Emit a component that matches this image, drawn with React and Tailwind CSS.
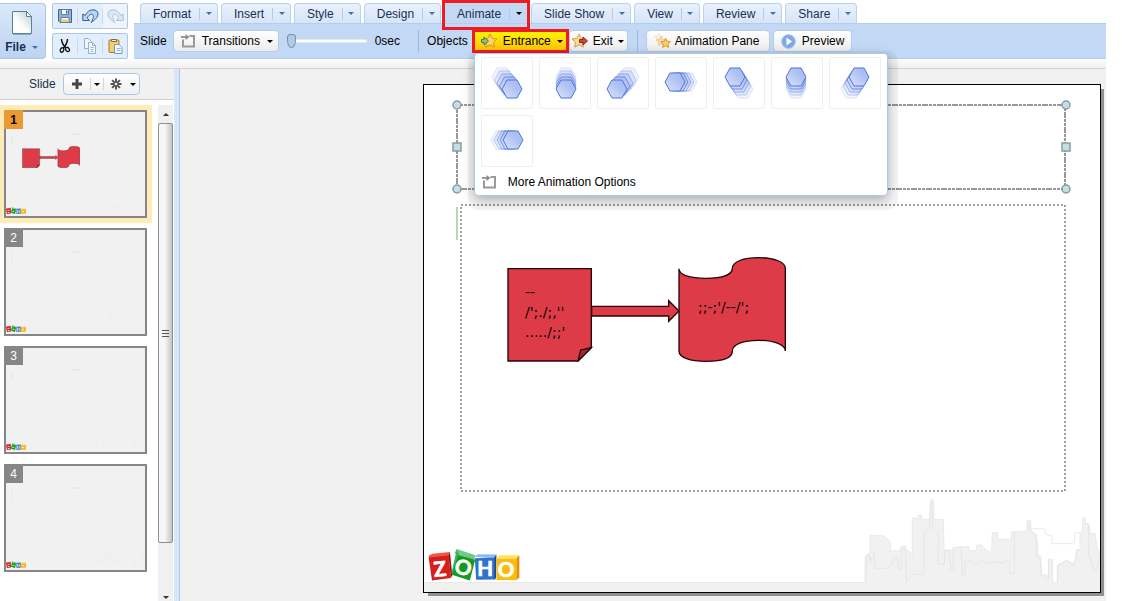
import { useState } from "react";

const TABS = ["Format", "Insert", "Style", "Design", "Animate", "Slide Show", "View", "Review", "Share"];

// cx/cy: front hexagon centre, dx/dy: how far the trail reaches behind it
const EFFECTS = [
  { name: "From top left", cx: 31, cy: 32, dx: -10, dy: -12 },
  { name: "From top", cx: 27, cy: 32, dx: 0, dy: -12 },
  { name: "From top right", cx: 20, cy: 32, dx: 12, dy: -12 },
  { name: "From right", cx: 20, cy: 25, dx: 12, dy: 0 },
  { name: "From bottom right", cx: 22, cy: 20, dx: 8, dy: 12 },
  { name: "From bottom", cx: 25, cy: 20, dx: 0, dy: 12 },
  { name: "From bottom left", cx: 30, cy: 20, dx: -8, dy: 12 },
  { name: "From left", cx: 32, cy: 25, dx: -12, dy: 0 },
];

function Caret({ className = "text-black" }) {
  return (
    <svg width="6" height="3" viewBox="0 0 6 3" fill="currentColor" className={`shrink-0 ${className}`}>
      <path d="M0 0h6L3 3z" />
    </svg>
  );
}

function FileIcon() {
  return (
    <svg width="20" height="24" viewBox="0 0 20 24">
      <defs>
        <linearGradient id="paper" x1="0" y1="1" x2="1" y2="0">
          <stop offset="0.4" stopColor="#fff" />
          <stop offset="0.8" stopColor="#d5dadd" />
        </linearGradient>
      </defs>
      <path d="M.5.5h14l5 5v17H.5z" fill="url(#paper)" stroke="#55839c" />
      <path d="M14.5.5v5h5z" fill="#fff" stroke="#55839c" />
      <path d="M1 23.5h18" stroke="#8fa9b8" />
    </svg>
  );
}

function SaveIcon() {
  return (
    <svg width="16" height="16" viewBox="0 0 16 16">
      <path d="M1.5 1.5h13v13H3l-1.500-1.500z" fill="#8fb3d9" stroke="#3f6593" />
      <path d="M4.500 1.500h7v5h-7z" fill="#fff" stroke="#5b80ab" />
      <path d="M9 2.500h1.500v3H9z" fill="#3f6593" />
      <path d="M4 9.500h8v5H4z" fill="#fff" stroke="#5b80ab" />
      <path d="M4.500 11.500h7V14h-7z" fill="#f1cf62" />
    </svg>
  );
}

function UndoIcon({ className = "" }) {
  return (
    <svg width="17" height="15" viewBox="0 0 17 15" className={className}>
      <path
        d="M.8 5v6.500h6.700L5.300 9c1.200-2.600 3.500-4.600 5.200-3.500 1.800 1.200.8 4.500-1.500 8 4-2.500 7-5.500 7-8.500 0-2.600-2-4.200-5-4.200-3.300 0-6 2-7.800 5.700z"
        fill="#b9d4f2"
        stroke="#2f6296"
        strokeLinejoin="round"
      />
    </svg>
  );
}

function CutIcon() {
  return (
    <svg width="12" height="16" viewBox="0 0 12 16" fill="none" stroke="#111">
      <path d="M2.500 1c0 3 1.500 6 4.500 9M8.500 1C8.500 4 7 7 4.500 10" strokeWidth="1.500" />
      <ellipse cx="3" cy="12" rx="1.700" ry="2.300" strokeWidth="1.300" transform="rotate(25 3 12)" />
      <ellipse cx="8.500" cy="11.500" rx="1.700" ry="2.300" strokeWidth="1.300" transform="rotate(-30 8.500 11.500)" />
    </svg>
  );
}

function CopyIcon() {
  return (
    <svg width="14" height="16" viewBox="0 0 14 16" stroke="#8fb3cd">
      <path d="M1.500.5h4l3 3v7h-7z" fill="#eef6fb" />
      <path d="M5.500 4.500h4l3 3v8h-7z" fill="#f7fbfe" />
      <path d="M9.500 4.500v3h3M7.500 9.500h3M7.500 11.500h3M7.500 13.500h3" fill="none" />
    </svg>
  );
}

function PasteIcon() {
  return (
    <svg width="15" height="16" viewBox="0 0 15 16">
      <rect x="1" y="2" width="10" height="12.500" rx="1" fill="#f5cf6b" stroke="#a57a25" />
      <path d="M3.500 3.500V1.500h5v2z" fill="#eee" stroke="#7b6a45" />
      <path d="M6.500 6.500h4.500l3 3v6H6.500z" fill="#f5fafe" stroke="#6d9dc2" />
      <path d="M8.500 10.500h4M8.500 12.500h4" stroke="#8fb6d4" />
    </svg>
  );
}

function TransitionIcon() {
  return (
    <svg width="14" height="14" viewBox="0 0 14 14" fill="none" stroke="#999">
      <path d="M8.500 2H13v10.500H2V5.500" strokeWidth="2" />
      <path d="M0 3h6" strokeWidth="2" />
      <path d="M4.500 0l4 3-4 3z" fill="#8c8c8c" stroke="none" />
    </svg>
  );
}

const STAR = "M8 1l2.100 4.400 4.900.6-3.600 3.300.9 4.800L8 11.800l-4.300 2.300.9-4.800L1 6l4.900-.6z";

function EntranceIcon() {
  return (
    <svg width="16" height="16" viewBox="0 0 16 16">
      <path d={STAR} fill="#fbd66a" stroke="#d8912a" transform="translate(1 0)" />
      <path d="M.5 6.500H3V4l4.500 4L3 12V9.500H.5z" fill="#8cc084" stroke="#3f7f49" />
    </svg>
  );
}

function ExitIcon() {
  return (
    <svg width="16" height="16" viewBox="0 0 16 16">
      <path d={STAR} fill="#fbdc93" stroke="#d99b45" transform="translate(-1 0)" />
      <path d="M7.500 6.500H11V4l4.500 4-4.500 4V9.500H7.500z" fill="#c9463d" stroke="#8d2c27" />
    </svg>
  );
}

function StarsIcon() {
  return (
    <svg width="17" height="16" viewBox="0 0 17 16">
      <g transform="scale(.6)" opacity="0.35">
        <path d={STAR} fill="#fbe0a0" stroke="#d99b45" />
      </g>
      <g transform="translate(2 3) scale(.65)" opacity="0.7">
        <path d={STAR} fill="#fbdc93" stroke="#d99b45" />
      </g>
      <g transform="translate(6 4.500) scale(.7)">
        <path d={STAR} fill="#fbd060" stroke="#d8912a" strokeWidth="1.300" />
      </g>
    </svg>
  );
}

function PlayIcon() {
  return (
    <svg width="15" height="15" viewBox="0 0 15 15">
      <circle cx="7.500" cy="7.500" r="6.800" fill="#7fa9e6" stroke="#a3bfe8" />
      <path d="M5.500 3.500l5.500 4-5.500 4z" fill="#fff" />
    </svg>
  );
}

function GearIcon() {
  return (
    <svg width="12" height="12" viewBox="0 0 12 12" stroke="#555" strokeWidth="2">
      <path d="M6 .5v11M.5 6h11M2.100 2.100l7.800 7.800M9.900 2.100L2.100 9.900" />
      <circle cx="6" cy="6" r="2.500" fill="#555" stroke="none" />
      <circle cx="6" cy="6" r="1.300" fill="#eee" stroke="none" />
    </svg>
  );
}

function HexIcon({ cx, cy, dx, dy }) {
  const layers = [
    { t: 1, opacity: 0.2 },
    { t: 0.75, opacity: 0.35 },
    { t: 0.5, opacity: 0.5 },
    { t: 0.25, opacity: 0.75 },
    { t: 0, opacity: 1 },
  ];
  return (
    <svg width="50" height="50" viewBox="1 1 50 50">
      {layers.map(({ t, opacity }) => (
        <path
          key={t}
          d="M-10 0l5-9H5l5 9-5 9H-5z"
          transform={`translate(${cx + dx * t} ${cy + dy * t})`}
          fill="url(#hex)"
          stroke="#4f74e0"
          opacity={opacity}
        />
      ))}
    </svg>
  );
}

function Logo({ className, letters }) {
  return (
    <svg className={className} viewBox="40 48 280 98">
      <path d="M42 70l12-5 52-6-4 18-58 10z" fill="#f0554c" />
      <path d="M42 76l60-6 7 68-57 7z" fill="#d81e1a" />
      <path d="M102 70l4-11 7 70-4 9z" fill="#8f0f0d" />
      <path d="M127 50l56 19-4 14-60-20z" fill="#6fc98b" />
      <path d="M127 50l-16 72 8 6 14-60z" fill="#3fae62" />
      <path d="M131 68l51 15-16 62-54-17z" fill="#149b1c" />
      <path d="M181 74l8-8 57 1-6 12z" fill="#8db9ee" />
      <path d="M181 78l58-1 4 65-58 1z" fill="#2f72cc" />
      <path d="M239 77l7-10-1 70-5 5z" fill="#174a93" />
      <path d="M246 78l8-9 61 0-9 10z" fill="#ffe45c" />
      <path d="M246 79h60v65h-60z" fill="#f9bd10" />
      <path d="M306 79l9-10v68l-9 7z" fill="#e58f06" />
      {letters ? (
        <g
          fill="#fff"
          stroke="#fff"
          strokeWidth="2"
          fontSize="62"
          fontWeight="700"
          fontFamily="Lato, sans-serif"
          textAnchor="middle"
        >
          <text x="76" y="133" transform="rotate(-6 76 110)">Z</text>
          <text x="146" y="128" transform="rotate(16 146 106)">O</text>
          <text x="212" y="132">H</text>
          <text x="275" y="135">O</text>
        </g>
      ) : (
        <g stroke="#fff" strokeWidth="12" fill="none">
          <path d="M62 95h26M64 125h26M130 108h26M198 90v40M224 90v40M264 112h26" />
        </g>
      )}
    </svg>
  );
}

function Skyline({ className }) {
  return (
    <svg className={className} viewBox="30 21 720 285" fill="none" strokeWidth="3">
      <path d="M545 116h36l8 18 17 3v24h66l4-33h14" stroke="#ebebeb" />
      <path
        d="M28 278h17l1-80 14-8v-53h40l22 18v27h28l5-14h12l1 14 12 3 7 20V84h18v-8h9v12h26l3-60h7l2 60h28l2 94h20l12-4 16-8h26l2 12h22v-17h15l5 10 25 15 2-62h16v20h40l2-23h45l2-33h10l1 31 13 9 7 28v38h9l3 57h15l5 13 1-60h11l1 70h14l3-53 25-13 20 10 10-12v-30l10-2v-50l8-8V83h7l1 19h10l6 28h13l7 50h10v140H28z"
        fill="#f1f1f1"
        stroke="#eaeaea"
      />
      <path
        d="M48 278V205l8-14 5 25 11-30 4 49h36l14-12 7-25 8 2 5 40 8-2v-64l13 5 2 98 18-24h35V130l16-14 3-80h5l2 80 17 14v90l18 4 2-44h12l6 60h6v-68h24l4 84h8v-46l20 2 8 12 20-12 20 10 20-8 20 6 18-8 8 6v32h14V125M537 92v28l22 14v62l10 4 6 56 14 10M596 268v-60M622 278v-52l26-14 24 14 8-46h10M706 102h10v90l14 48h10l10-40"
        stroke="#e6e6e6"
      />
    </svg>
  );
}

function Shapes({ className }) {
  return (
    <svg className={className} viewBox="48 33 840 318" fill="#dd3b48" stroke="#24060a" strokeWidth="4">
      <path d="M54 71h250v237l-40 40H54z" />
      <path d="M264 348l8-33 32-7z" fill="#a92633" />
      <path d="M305 184h231v-17l31 31-31 31v-16H305z" />
      <path d="M567 71c0 19 33 29 81 29 52 0 79-12 79-30 0-20 33-32 79-32 44 0 80 12 80 32v248c0-20-36-32-80-32-46 0-79 12-79 32 0 20-27 31-79 31-48 0-81-11-81-31z" />
    </svg>
  );
}

function ToolButton({ className, children }) {
  return (
    <button
      type="button"
      className={`flex h-[22px] items-center rounded-sm border border-[#b5cdea] bg-linear-to-b from-white to-[#ececec] ${className}`}
    >
      {children}
    </button>
  );
}

function Tab({ label, active, onSelect }) {
  return (
    <button
      type="button"
      onClick={onSelect}
      className={`relative flex h-5 items-center rounded-t-sm border border-b-0 pl-3 ${
        active
          ? "border-[#c3d8f5] bg-[#c3d8f5]"
          : "border-[#b9d2ef] bg-linear-to-b from-[#e9f1fc] to-[#d6e5f8]"
      }`}
    >
      {label}
      <span className="ml-2 h-3 w-px bg-[#b5cbe6]" />
      <span className="flex w-[17px] justify-center">
        <Caret className={active ? "text-black" : "text-[#3c74ab]"} />
      </span>
      {active && <span className="absolute -top-1 -right-[3px] -left-[3px] z-10 h-[30px] border-3 border-[#ed1c24]" />}
    </button>
  );
}

function EntranceMenu() {
  return (
    <div className="absolute top-6 left-0.5 z-20 w-[414px] rounded-sm border border-[#a9c8ee] bg-white px-1.5 pt-[3px] pb-1 shadow-[0_4px_12px_rgba(0,0,0,0.3),2px_6px_0_8px_rgba(0,0,0,0.04)]">
      <div className="flex flex-wrap gap-1.5">
        {EFFECTS.map(({ name, ...hex }) => (
          <button
            key={name}
            type="button"
            aria-label={name}
            className="size-[52px] rounded-xs border border-[#efefef] bg-white"
          >
            <HexIcon {...hex} />
          </button>
        ))}
      </div>
      <button type="button" className="mt-1.5 flex h-[18px] items-center gap-3 pl-px">
        <TransitionIcon />
        More Animation Options
      </button>
    </div>
  );
}

function Toolbar() {
  return (
    <div className="flex h-9 items-center border-y border-[#b3cdec] bg-[#c3d8f5] pl-1.5 text-black">
      <span>Slide</span>
      <ToolButton className="ml-1.5 w-[106px] gap-[7px] pl-[7px]">
        <TransitionIcon />
        Transitions
        <Caret />
      </ToolButton>
      <input
        type="range"
        aria-label="Duration"
        min="0"
        max="10"
        defaultValue="0"
        className="ml-2 h-4 w-20 appearance-none bg-transparent [&::-webkit-slider-runnable-track]:h-1 [&::-webkit-slider-runnable-track]:rounded-full [&::-webkit-slider-runnable-track]:border-y [&::-webkit-slider-runnable-track]:border-[#dce8f9] [&::-webkit-slider-runnable-track]:bg-white [&::-webkit-slider-thumb]:-mt-1.5 [&::-webkit-slider-thumb]:h-[14px] [&::-webkit-slider-thumb]:w-[9px] [&::-webkit-slider-thumb]:appearance-none [&::-webkit-slider-thumb]:rounded-[4px_4px_5px_5px/4px_4px_9px_9px] [&::-webkit-slider-thumb]:border [&::-webkit-slider-thumb]:border-[#7590b5] [&::-webkit-slider-thumb]:bg-[#b3cae6]"
      />
      <span className="ml-2">0sec</span>
      <span className="ml-[18px] h-[22px] w-px bg-[#9dbbe2]" />
      <span className="ml-2">Objects</span>
      <div className="relative ml-1">
        <button
          type="button"
          className="flex h-6 w-[97px] items-center gap-1.5 border-3 border-[#ed1c24] bg-linear-to-b from-[#fff200] to-[#ffc20a] pl-1.5"
        >
          <EntranceIcon />
          Entrance
          <Caret />
        </button>
        <EntranceMenu />
      </div>
      <ToolButton className="w-[59px] gap-[5px] pl-0.5">
        <ExitIcon />
        Exit
        <Caret />
      </ToolButton>
      <span className="ml-[9px] h-[22px] w-px bg-[#9dbbe2]" />
      <ToolButton className="ml-2 w-[124px] gap-1 pl-[7px]">
        <StarsIcon />
        Animation Pane
      </ToolButton>
      <ToolButton className="ml-[3px] w-[79px] gap-1.5 pl-[7px]">
        <PlayIcon />
        Preview
      </ToolButton>
    </div>
  );
}

function Header() {
  const [tab, setTab] = useState("Animate");

  return (
    <header className="flex h-[69px] border-b border-[#d6d6d6] bg-linear-to-b from-white from-85% to-[#efefef] pt-[3px] text-[#1b2f50]">
      <button
        type="button"
        className="flex h-14 w-[46px] flex-col items-center rounded-r-sm border border-l-0 border-[#a9c6ea] bg-linear-to-b from-[#dbe8fa] to-[#bcd3f2] pt-[7px] pr-0.5"
      >
        <FileIcon />
        <span className="mt-1 flex items-center gap-1.5 font-bold">
          File
          <Caret className="text-[#3c74ab]" />
        </span>
      </button>

      <div className="ml-1.5 flex w-[76px] flex-col gap-1">
        <div className="flex h-[26px] items-center divide-x divide-[#c6daf2] rounded-xs border border-[#a9c8ee] bg-[#e3eefc]">
          <button type="button" aria-label="Save" className="flex flex-1 justify-center">
            <SaveIcon />
          </button>
          <button type="button" aria-label="Undo" className="flex flex-1 justify-center">
            <UndoIcon />
          </button>
          <button type="button" aria-label="Redo" disabled className="flex h-full flex-1 items-center justify-center bg-[#eff4fb]">
            <UndoIcon className="-scale-x-100 opacity-35" />
          </button>
        </div>
        <div className="flex h-[26px] items-center divide-x divide-[#c6daf2] rounded-xs border border-[#a9c8ee] bg-[#e3eefc]">
          <button type="button" aria-label="Cut" className="flex flex-1 justify-center">
            <CutIcon />
          </button>
          <button type="button" aria-label="Copy" className="flex flex-1 justify-center">
            <CopyIcon />
          </button>
          <button type="button" aria-label="Paste" className="flex flex-1 justify-center">
            <PasteIcon />
          </button>
        </div>
      </div>

      <div className="ml-1.5 flex-1">
        <nav className="flex gap-[3px] pl-1.5">
          {TABS.map((name) => (
            <Tab key={name} label={name} active={tab === name} onSelect={() => setTab(name)} />
          ))}
        </nav>
        <Toolbar />
      </div>
    </header>
  );
}

function Thumbnail({ number, selected, onSelect }) {
  return (
    <button
      type="button"
      onClick={onSelect}
      className={`block w-[152px] py-[5px] pl-1 ${selected ? "bg-[#fdebb8]" : ""}`}
    >
      <span className="relative block h-[108px] w-[143px] border-2 border-[#868686] bg-[#f1f1f1]">
        <span
          className={`absolute -top-0.5 -left-0.5 flex size-[19px] items-center justify-center ${
            selected ? "bg-[#ea9a33] font-bold text-black" : "bg-[#868686] text-white"
          }`}
        >
          {number}
        </span>
        <span className="absolute top-6 left-[5px] h-2 w-0.5 bg-[#e6eee8]" />
        <span className="absolute top-[21px] left-[65px] h-0.5 w-2 bg-[#f5e1e3]" />
        {selected && <Shapes className="absolute top-[34px] left-4 h-[22px] w-[58px]" />}
        <Logo className="absolute bottom-0.5 left-0 h-[7px] w-5" />
        <Skyline className="absolute right-0 bottom-0.5 h-5 w-[50px] opacity-50" />
      </span>
    </button>
  );
}

function Sidebar() {
  const [current, setCurrent] = useState(1);

  return (
    <aside className="flex w-[180px] shrink-0 border-r border-[#adc8e8] bg-[#d8e6fa]">
      <div className="flex w-[174px] flex-col bg-white">
        <div className="flex h-[31px] items-center gap-[7px] border-b border-[#d3d3d3] bg-[#f1f1f1] pl-[29px] text-[#1b2f50]">
          Slide
          <div className="flex h-[22px] w-[77px] items-center rounded-sm border border-[#a9c8ee] bg-linear-to-b from-white to-[#f0f0f0]">
            <button type="button" aria-label="Add slide" className="flex w-[26px] justify-center">
              <svg width="10" height="10" viewBox="0 0 10 10" stroke="#444" strokeWidth="3">
                <path d="M5 0v10M0 5h10" />
              </svg>
            </button>
            <button
              type="button"
              aria-label="Slide layouts"
              className="flex h-3 w-[14px] items-center justify-center border-x border-[#d5d5d5]"
            >
              <Caret />
            </button>
            <button type="button" aria-label="Slide settings" className="flex flex-1 items-center justify-center gap-2 pl-1">
              <GearIcon />
              <Caret />
            </button>
          </div>
        </div>

        <div className="flex flex-1 pt-[5px]">
          <div className="flex w-[158px] flex-col">
            {[1, 2, 3, 4].map((n) => (
              <Thumbnail key={n} number={n} selected={n === current} onSelect={() => setCurrent(n)} />
            ))}
          </div>
          <div className="flex w-[15px] flex-col items-center bg-[#f0f0f0]">
            <div className="flex h-[18px] items-center">
              <Caret className="rotate-180 text-[#333]" />
            </div>
            <div className="flex h-[420px] w-full flex-col items-center justify-center gap-0.5 rounded-xs border border-[#8f8f8f] bg-linear-to-r from-[#f6f6f6] from-45% to-[#c4c4c8]">
              <span className="h-px w-[7px] bg-[#555]" />
              <span className="h-px w-[7px] bg-[#555]" />
              <span className="h-px w-[7px] bg-[#555]" />
            </div>
            <div className="mt-auto flex h-2 items-center">
              <Caret className="text-[#333]" />
            </div>
          </div>
        </div>
      </div>
    </aside>
  );
}

function Slide() {
  return (
    <div className="relative h-[509px] w-[678px] border border-black bg-white shadow-[4px_4px_0_-1px_#919191]">
      <div className="absolute inset-x-0 bottom-0 h-2.5 border-t border-[#e9e9e9] bg-[#f1f1f1]" />
      <Skyline className="absolute right-0 bottom-0 h-[95px] w-[240px]" />
      <Logo letters className="absolute bottom-[11px] left-1 h-[33px] w-[93px]" />

      <svg className="absolute inset-0 size-full" viewBox="0 0 676 507" fill="none">
        <path d="M33 122v33" stroke="#b9d5bd" strokeWidth="2" />
        <rect x="37" y="120" width="604" height="286" stroke="#808080" strokeWidth="1.500" strokeDasharray="2 2" />
        <rect x="33" y="20" width="608" height="84" stroke="#777" strokeWidth="1.500" strokeDasharray="6 1 3 1 3 1" />
        <g fill="#bfe0e6" stroke="#8b9c9f" strokeWidth="1.500">
          <circle cx="33" cy="20" r="4" />
          <circle cx="642" cy="20" r="4" />
          <circle cx="33" cy="104" r="4" />
          <circle cx="642" cy="104" r="4" />
          <rect x="29" y="58" width="8" height="8" />
          <rect x="638" y="58" width="8" height="8" />
        </g>
      </svg>

      <Shapes className="absolute top-[171px] left-[82px] h-[106px] w-[280px]" />
      <p className="absolute top-[197px] left-[101px] font-['DejaVu_Sans',sans-serif] text-sm text-black">
        --
        <br />
        {"/';./;,''"}
        <br />
        {"...../;;'"}
      </p>
      <p className="absolute top-[212px] left-[274px] font-['DejaVu_Sans',sans-serif] text-sm text-black">
        {";;-;'/--/';"}
      </p>
    </div>
  );
}

export default function App() {
  return (
    <div className="flex min-h-screen flex-col bg-white pr-9 font-['Liberation_Sans',Arial,sans-serif] text-xs">
      <svg width="0" height="0" className="absolute">
        <defs>
          <linearGradient id="hex" x1="0" y1="1" x2="1" y2="0">
            <stop offset="0" stopColor="#dbe4fb" />
            <stop offset="0.6" stopColor="#b0c2f2" />
            <stop offset="1" stopColor="#a3b8ef" />
          </linearGradient>
        </defs>
      </svg>
      <Header />
      <div className="flex flex-1">
        <Sidebar />
        <main className="flex flex-1 justify-end bg-[#f1f1f1] pt-[15px] pr-[5px] pb-2">
          <Slide />
        </main>
      </div>
    </div>
  );
}
